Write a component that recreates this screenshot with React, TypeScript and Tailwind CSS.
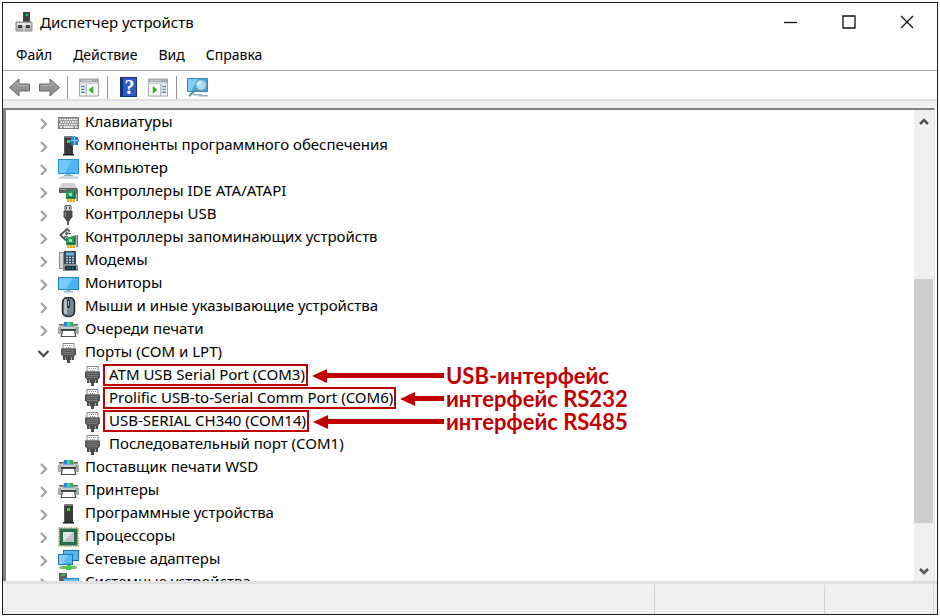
import { useState } from "react";
import type { ReactNode } from "react";

type IconName =
  | "keyboard" | "software" | "computer" | "ide" | "usb" | "storage" | "modem" | "monitor"
  | "mouse" | "printer" | "port" | "device" | "cpu" | "network" | "system";

type Port = { name: string; note?: string };
type Category = { name: string; icon: IconName; ports?: Port[] };

const categories: Category[] = [
  { name: "Клавиатуры", icon: "keyboard" },
  { name: "Компоненты программного обеспечения", icon: "software" },
  { name: "Компьютер", icon: "computer" },
  { name: "Контроллеры IDE ATA/ATAPI", icon: "ide" },
  { name: "Контроллеры USB", icon: "usb" },
  { name: "Контроллеры запоминающих устройств", icon: "storage" },
  { name: "Модемы", icon: "modem" },
  { name: "Мониторы", icon: "monitor" },
  { name: "Мыши и иные указывающие устройства", icon: "mouse" },
  { name: "Очереди печати", icon: "printer" },
  {
    name: "Порты (COM и LPT)",
    icon: "port",
    ports: [
      { name: "ATM USB Serial Port (COM3)", note: "USB-интерфейс" },
      { name: "Prolific USB-to-Serial Comm Port (COM6)", note: "интерфейс RS232" },
      { name: "USB-SERIAL CH340 (COM14)", note: "интерфейс RS485" },
      { name: "Последовательный порт (COM1)" },
    ],
  },
  { name: "Поставщик печати WSD", icon: "printer" },
  { name: "Принтеры", icon: "printer" },
  { name: "Программные устройства", icon: "device" },
  { name: "Процессоры", icon: "cpu" },
  { name: "Сетевые адаптеры", icon: "network" },
  { name: "Системные устройства", icon: "system" },
];

const tower = (
  <>
    <path d="M6 1 7 0h7l1 1v17H6z" fill="#3a3a3a" />
    <path d="M6 1 7 0h7l1 1v1H6z" fill="#777" />
    <path d="M6 2h1v16H6z" fill="#555" />
    <rect x="9" y="4" width="3" height="3" fill="#2fe02f" />
    <path d="M5 18h11v1.5H5z" fill="#1c1c1c" />
  </>
);

const card = (
  <>
    <path d="M8 10 18 7v10H8z" fill="#2a9a60" />
    <path d="M18.500 7H20v12h-1.500z" fill="#6d6d6d" />
    <path d="M9 17h8v3H9z" fill="#f0a81c" />
    <path d="M11.500 17v3M14.500 17v3" stroke="#fff3b0" strokeWidth=".6" />
    <rect x="11" y="11" width="3" height="3" fill="#8fe3b4" />
    <path d="M9 15.500h8M16.500 9.500v4" stroke="#0f5c37" />
  </>
);

const drawings: Record<IconName, ReactNode> = {
  keyboard: (
    <>
      <rect x="0" y="4" width="21" height="12" fill="#7d7d7d" />
      <rect x="1" y="5" width="19" height="10" fill="#8d8d8d" />
      <path d="M1.500 6.500h18M2.500 9h17M1.500 11.500h18" stroke="#fff" strokeWidth="1.300" strokeDasharray="1.600 .7" />
      <path d="M2 14h2M5.500 14h10M17 14h2.500" stroke="#fff" strokeWidth="1.300" />
    </>
  ),
  software: (
    <>
      {tower}
      <path d="M13 1h2.500V0h2v1H20v2.500h1v2h-1V9h-7V6h-1V3.500h1z" fill="#2383cf" />
      <path d="M16.500 1v7.500M13 4.500h7" stroke="#8bcbf3" />
    </>
  ),
  computer: (
    <>
      <rect x="0" y="0" width="21" height="15" fill="#2a8ed0" />
      <rect x="1" y="1" width="19" height="13" fill="#4fb5f5" />
      <path d="M1 1h13L7 14H1z" fill="#73c8fb" />
      <path d="M8 15h5v1H8z" fill="#9cc4dc" />
      <path d="M6 16h9v1H6z" fill="#7fb0cc" />
      <path d="M2 17.500h17l2 2H0z" fill="#a9b5bd" />
      <path d="M2 18.500h17" stroke="#d5dce1" strokeDasharray="2 .7" />
    </>
  ),
  ide: (
    <>
      <path d="M4 1h12l3 5H1z" fill="#d3d3d3" />
      <path d="M1 6h18v5H1z" fill="#5f5f5f" />
      <path d="M2 7.500h7" stroke="#999" />
      {card}
    </>
  ),
  usb: (
    <>
      <path d="M7 .5h6V6H7z" fill="#d4d4d4" stroke="#555" />
      <path d="M8.500 2v2M11.500 2v2" stroke="#444" />
      <path d="M5.500 6h9v6L12 15v1H8v-1l-2.500-3z" fill="#4b4b4b" />
      <path d="M7.500 7v5" stroke="#858585" />
      <path d="M10 15.500V20" stroke="#555" strokeWidth="1.800" />
    </>
  ),
  storage: (
    <>
      <path d="M11.500 3.500 9 1 2.500 7 8 12.500" fill="none" stroke="#505050" strokeWidth="1.800" />
      <path d="M13 5.500H7M6 9h4" stroke="#606060" strokeWidth="1.500" />
      <path d="m8 3 2.500 2.500L8 8z" fill="#606060" />
      {card}
    </>
  ),
  modem: (
    <>
      <path d="M1 1h6v17H1z" fill="#858b90" />
      <path d="M2 2h3v15H2z" fill="#cfd4d8" />
      <path d="M6 0h12v13H6z" fill="#3f464b" />
      <rect x="8" y="1.500" width="8" height="3" fill="#5fb9f5" />
      <path d="M8 6.500h8M8 9h8M8 11.500h8" stroke="#a9cfe6" strokeWidth="1.500" strokeDasharray="2 1" />
      <path d="M7 13h11l2 2v5H5v-5z" fill="#8c9195" />
      <path d="M7 15h11v4H7z" fill="#202a2e" />
      <path d="M9 17h7" stroke="#1db5db" strokeDasharray="1.500 1" />
    </>
  ),
  monitor: (
    <>
      <rect x="0" y="3" width="21" height="13" fill="#2382bd" />
      <rect x="1" y="4" width="19" height="11" fill="#4bb3ef" />
      <path d="M1 4h14L8 15H1z" fill="#79cbfa" />
      <path d="M9 16h3v1h3v1.500H6V17h3z" fill="#84b6d1" />
    </>
  ),
  mouse: (
    <>
      <rect x="4.500" y=".5" width="12" height="19" rx="5" fill="#7b8790" stroke="#20282d" strokeWidth="1.500" />
      <rect x="6" y="2" width="3" height="15" rx="1.500" fill="#b4bec5" />
      <rect x="9" y="2" width="3" height="9" rx="1.500" fill="#27333b" />
      <path d="M10.500 4v5" stroke="#9ecae0" />
    </>
  ),
  printer: (
    <>
      <path d="M6 2h9l1 5H5z" fill="#2f7fd6" />
      <path d="M9 2h3v4H8.500z" fill="#3cc9d8" />
      <path d="M12 2h3l.5 4H12z" fill="#3fae4c" />
      <path d="M1 4h4.500L5 6.500h11L15.500 4H20v2l1 2v6H0V8l1-2z" fill="#c9cdd0" />
      <path d="M1 4h4.500v1.500H1zM15.500 4H20v1.500h-4.500z" fill="#5d6264" />
      <path d="M0 7h3v7H0zM18 7h3v7h-3z" fill="#a4aaae" />
      <path d="M3 9h15v2H3z" fill="#35393b" />
      <path d="M4 10h13l1.500 7h-16z" fill="#4c5052" />
      <path d="M5 11h11l1 5H4z" fill="#fff" />
      <path d="M17 8h2" stroke="#44c24a" />
    </>
  ),
  port: (
    <>
      <path d="M5 .5h11V6H5z" fill="#fff" stroke="#858585" />
      <path d="M7 2.500h8M8 4.500h6" stroke="#858585" strokeDasharray="1 1" />
      <path d="M3 5.500h15v6L15.500 14h-10L3 11.500z" fill="#565656" />
      <path d="M5 7.500h11M5 9.500h11M5 11.500h11" stroke="#777" />
      <path d="M5 13h2.500v4H5zM13.500 13H16v4h-2.500zM8 14h5v3h-1v3H9v-3H8z" fill="#4c4c4c" />
    </>
  ),
  device: tower,
  cpu: (
    <>
      <rect x="1" y="1" width="19" height="18" fill="none" stroke="#b39a45" strokeWidth="1.500" strokeDasharray="1.200 1.200" />
      <rect x="1.500" y="1.500" width="18" height="17" fill="#2a6e4e" />
      <rect x="5" y="5" width="11" height="10" fill="#c3c5c4" />
      <path d="M5 5h10l-10 10z" fill="#e4e6e5" />
    </>
  ),
  network: (
    <>
      <rect x="5.500" y=".5" width="15" height="10" fill="#54b6ef" stroke="#1d75ac" />
      <rect x=".5" y="4.500" width="14" height="10" fill="#55b9f4" stroke="#1d75ac" />
      <path d="M1 5h9l-5 9H1z" fill="#83cffa" />
      <path d="M9 15h4v1h5v3h-5v1H8v-1H2v-3h7z" fill="#4fcb48" />
      <path d="M1 17.500h4M15 17.500h4" stroke="#9fb59c" strokeWidth="2" />
    </>
  ),
  system: (
    <>
      <path d="M1 0h8v8H1z" fill="#5e6265" />
      <path d="M3 2h4" stroke="#35d34d" strokeWidth="1.500" />
      <rect x="5" y="5" width="16" height="11" fill="#2787c4" />
      <rect x="6" y="6" width="14" height="9" fill="#65bef1" />
    </>
  ),
};

function DeviceIcon({ name }: { name: IconName }) {
  return (
    <svg viewBox="0 0 21 21" className="w-[21px] h-[21px] shrink-0 self-end" aria-hidden="true">
      {drawings[name]}
    </svg>
  );
}

function Chevron({ open }: { open: boolean }) {
  return (
    <svg viewBox="0 0 12 12" className="w-3 h-3" fill="none" strokeWidth="2.200" aria-hidden="true">
      {open ? <path d="m1.500 4 5 5 5-5" stroke="#484848" /> : <path d="m4 2 5 5-5 5" stroke="#a3a3a3" />}
    </svg>
  );
}

function PortRow({ port }: { port: Port }) {
  return (
    <li className="flex items-center h-[23px] pl-[76px]">
      <div className={port.note ? "flex items-center h-full w-[362px] shrink-0" : "flex items-center h-full"}>
        <DeviceIcon name="port" />
        {port.note ? (
          <>
            <span className="flex items-center self-start h-[22px] shrink-0 border-2 border-[#c00000] pl-1 pr-px pb-[2px] whitespace-nowrap">{port.name}</span>
            <span className="flex items-center flex-1 ml-1" aria-hidden="true">
              <svg viewBox="0 0 15 14" className="w-[15px] h-[14px] shrink-0"><path d="M0 7 15 0v14z" fill="#c00000" /></svg>
              <span className="flex-1 h-[5px] bg-[#c00000]" />
            </span>
          </>
        ) : (
          <span className="pl-[6px] pb-[3px] whitespace-nowrap">{port.name}</span>
        )}
      </div>
      {port.note && (
        <strong className="pl-[2px] font-['Lato','Open_Sans',sans-serif] text-[22px] leading-5 font-bold text-[#c00000] whitespace-nowrap">{port.note}</strong>
      )}
    </li>
  );
}

function CategoryRow({ item }: { item: Category }) {
  const [open, setOpen] = useState(!!item.ports);

  return (
    <li>
      <div className="flex items-center h-[23px] pl-[31px]">
        <button onClick={() => setOpen(!open)} aria-label={item.name} aria-expanded={open} className="w-[21px] shrink-0">
          <Chevron open={open} />
        </button>
        <DeviceIcon name={item.icon} />
        <span className="pl-[6px] pb-[3px] whitespace-nowrap">{item.name}</span>
      </div>
      {open && item.ports && (
        <ul>
          {item.ports.map((port) => <PortRow key={port.name} port={port} />)}
        </ul>
      )}
    </li>
  );
}

function Panel({ right }: { right?: boolean }) {
  return (
    <svg viewBox="0 0 21 19" className="w-5 h-[19px]" aria-hidden="true">
      <path d="M.5.5h20v18H.5z" fill="#f8f8f8" stroke="#a0a0a0" />
      <path d="M1 1h19v3H1z" fill="#8d969d" />
      <path d="M2 2.500h12M16 2.500h1M18 2.500h1" stroke="#e9e9e9" />
      <path d="M1 5.500h19" stroke="#c4c4c4" />
      {right ? (
        <>
          <path d="M13.500 6v12" stroke="#999" />
          <path d="m5 8 5 4-5 4z" fill="#31b51f" />
          <path d="M15 8.500h4M15 11.500h4M15 14.500h4" stroke="#4a7db0" strokeWidth="1.500" />
        </>
      ) : (
        <>
          <path d="M7.500 6v12" stroke="#999" />
          <path d="m15 8-5 4 5 4z" fill="#31b51f" />
          <path d="M2 8.500h4M2 11.500h4M2 14.500h4" stroke="#4a7db0" strokeWidth="1.500" />
        </>
      )}
    </svg>
  );
}

function Arrow({ forward }: { forward?: boolean }) {
  return (
    <svg viewBox="0 0 21 19" className="w-[21px] h-[19px]" aria-hidden="true">
      <path
        d={forward ? "M20.500 9.500 11 1v5H.5v7H11v5z" : "M.5 9.500 10 1v5h10.500v7H10v5z"}
        fill="#939393"
        stroke="#686868"
      />
      <path d={forward ? "M2 7.500h10V4l6 5" : "M19 7.500H9V4L3 9"} fill="none" stroke="#b9b9b9" />
    </svg>
  );
}

function Toolbar() {
  return (
    <div className="flex items-center h-7 px-[6px] pt-1 shrink-0">
      <button aria-label="Назад"><Arrow /></button>
      <button aria-label="Вперед" className="ml-[9px]"><Arrow forward /></button>
      <span className="w-px h-[23px] ml-[7px] bg-[#929292]" />
      <button aria-label="Дерево консоли" className="ml-[11px]"><Panel /></button>
      <span className="w-px h-[23px] ml-2 bg-[#929292]" />
      <button aria-label="Справка" className="ml-3">
        <span className="flex items-center justify-center w-[17px] h-5 bg-[#2f5bc8] border border-l-3 border-[#16357f] text-white font-['Liberation_Serif',serif] text-[20px] leading-[18px] font-bold">?</span>
      </button>
      <button aria-label="Область действий" className="ml-[11px]"><Panel right /></button>
      <span className="w-px h-[23px] ml-2 bg-[#929292]" />
      <button aria-label="Обновить конфигурацию" className="ml-[10px]">
        <svg viewBox="0 0 21 21" className="w-[21px] h-[21px]" aria-hidden="true">
          <path d="M.5 1.500h20v13H.5z" fill="#42aeea" stroke="#268bc3" />
          <path d="M1 2h10L4 14H1z" fill="#81d0fa" />
          <path d="M6 17h9v1.500H6zM12 18h9v1.500h-9z" fill="#8fb3c6" />
          <path d="m10 12-8 7" stroke="#6f8592" strokeWidth="2" />
          <circle cx="14" cy="8" r="5.500" fill="#a9def7" stroke="#7c9aab" strokeWidth="1.300" />
          <path d="M11 8c0-2 1-3 3-3" fill="none" stroke="#e9f9ff" strokeWidth="1.500" />
        </svg>
      </button>
    </div>
  );
}

function ScrollBar() {
  return (
    <div className="flex flex-col w-5 shrink-0 bg-[#f0f0f0]">
      <button aria-label="Вверх" className="flex items-center justify-center h-6">
        <svg viewBox="0 0 10 8" className="w-[10px] h-2" fill="none"><path d="m1 6 4-4 4 4" stroke="#555" strokeWidth="2.500" /></svg>
      </button>
      <div className="flex flex-col flex-1">
        <div className="grow-[145]" />
        <div className="grow-[244] mr-px bg-[#cdcdcd]" />
        <div className="grow-[38]" />
      </div>
      <button aria-label="Вниз" className="flex items-center justify-center h-5">
        <svg viewBox="0 0 10 8" className="w-[10px] h-2" fill="none"><path d="m1 2 4 4 4-4" stroke="#555" strokeWidth="2.500" /></svg>
      </button>
    </div>
  );
}

export default function App() {
  return (
    <div className="h-screen bg-white pt-[2px] pl-[2px] pr-[2px] pb-px">
      <div className="flex flex-col h-full border border-[#202020] bg-white text-black font-['Noto_Sans','Open_Sans',sans-serif] text-[15px] leading-5">
        {/* Title bar */}
        <header className="flex items-center justify-between h-[37px] pl-3 pr-[23px] shrink-0">
          <div className="flex items-center gap-[7px]">
            <svg viewBox="0 0 18 20" className="w-[18px] h-5" aria-hidden="true">
              <path d="M8 0h7v10H8z" fill="#3b4145" />
              <path d="M11 2h2v2h-2z" fill="#24d44d" />
              <path d="M1 10h16v9H1z" fill="#b5b5b5" stroke="#8a8a8a" />
              <path d="M2 11h14v3H2z" fill="#e2e2e2" />
              <path d="M3 13h4v3H3zM11 13h4v3h-4z" fill="#454545" />
              <path d="M9 11v8" stroke="#eee" />
            </svg>
            <h1>Диспетчер устройств</h1>
          </div>
          <div className="flex gap-[44px]">
            <button aria-label="Свернуть"><svg viewBox="0 0 14 14" className="w-[14px] h-[14px]"><path d="M0 7.500h13" stroke="#111" strokeWidth="1.300" /></svg></button>
            <button aria-label="Развернуть"><svg viewBox="0 0 14 14" className="w-[14px] h-[14px]"><path d="M1 1h12v12H1z" fill="none" stroke="#111" strokeWidth="1.300" /></svg></button>
            <button aria-label="Закрыть"><svg viewBox="0 0 14 14" className="w-[14px] h-[14px]"><path d="m1 1 12 12M13 1 1 13" stroke="#111" strokeWidth="1.300" /></svg></button>
          </div>
        </header>

        {/* Menu */}
        <nav className="flex items-center gap-[21px] h-[31px] px-[13px] border-b border-[#a7a7a7] text-[14px] shrink-0">
          <button>Файл</button>
          <button>Действие</button>
          <button>Вид</button>
          <button>Справка</button>
        </nav>

        <Toolbar />
        <div className="h-[9px] shrink-0 bg-[#f0f0f0] border-t-2 border-[#e1e1e1]" />

        {/* Device tree */}
        <main className="flex flex-1 min-h-0 mr-[2px] border-t-2 border-l-3 border-r border-r-[#e3e3e3] border-t-[#808080] border-l-[#808080]">
          <ul className="flex-1 min-w-0 overflow-hidden pt-px">
            {categories.map((item) => <CategoryRow key={item.name} item={item} />)}
          </ul>
          <ScrollBar />
        </main>

        {/* Status bar */}
        <footer className="flex h-[33px] shrink-0 bg-[#f0f0f0] border-t-3 border-[#dfdfdf] pt-px">
          <div className="flex-1 border-r border-[#d5d5d5]" />
          <div className="w-[170px] border-r border-[#d5d5d5]" />
          <div className="w-[109px] border-r border-[#d5d5d5]" />
          <div className="w-[3px]" />
        </footer>
      </div>
    </div>
  );
}
